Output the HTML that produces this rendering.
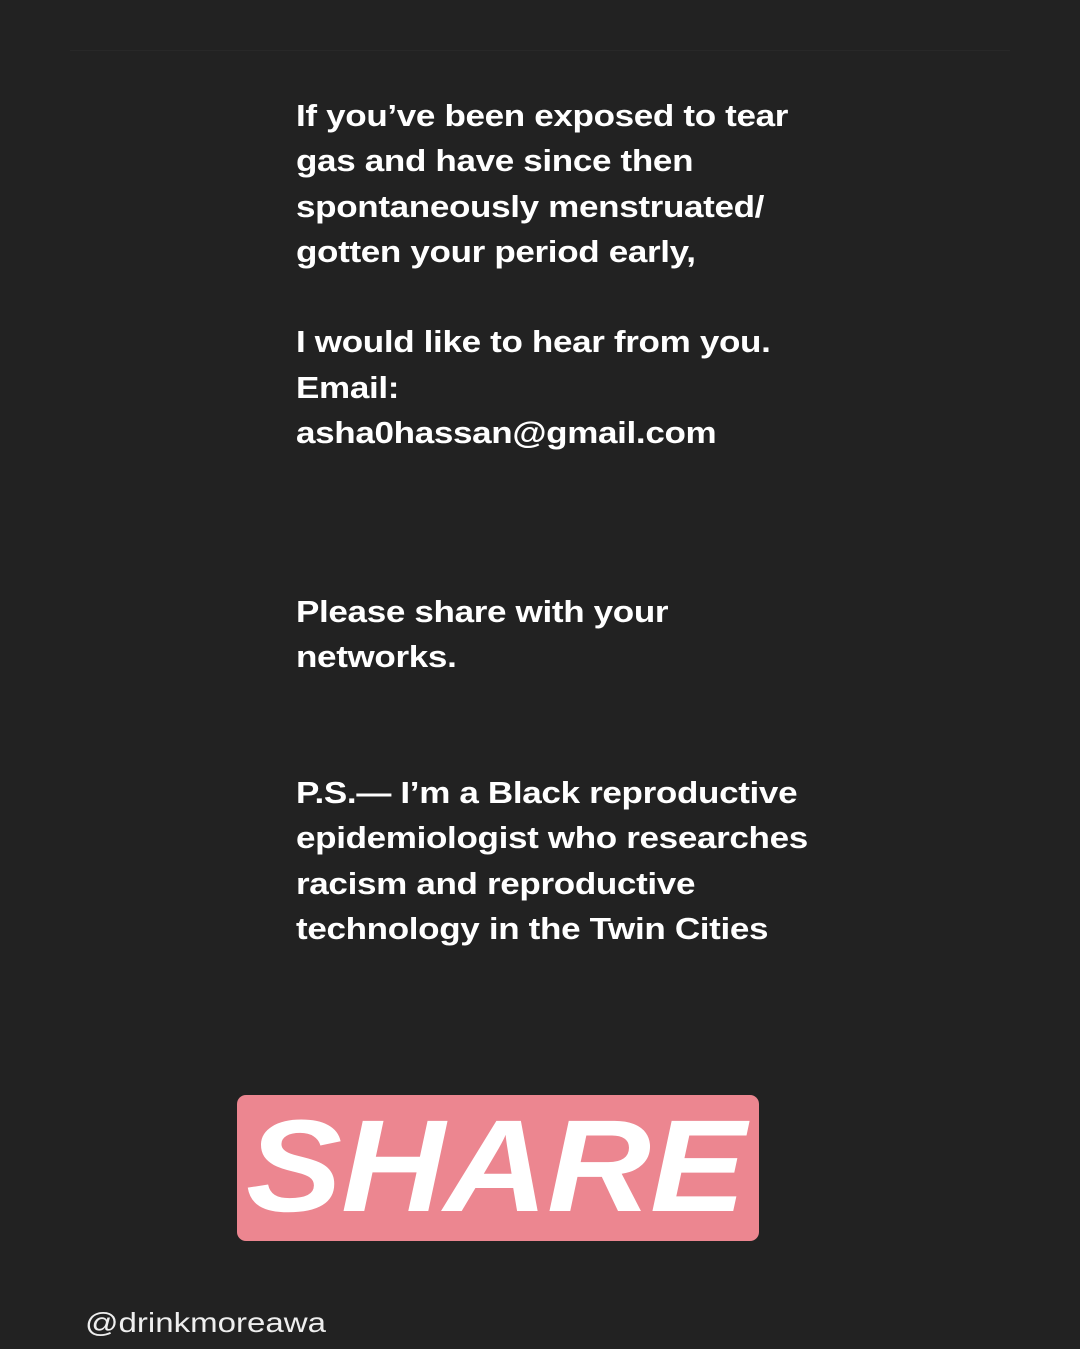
<!DOCTYPE html>
<html><head><meta charset="utf-8"><style>
html,body{margin:0;padding:0;background:#222222;}
body{width:1080px;height:1349px;position:relative;overflow:hidden;font-family:"Liberation Sans",sans-serif;}
.t{position:absolute;left:296px;color:#fff;font-weight:bold;font-size:31px;line-height:45.3px;letter-spacing:-0.3px;white-space:nowrap;transform:scaleX(1.13);transform-origin:left top;}
.box{position:absolute;left:237px;top:1095px;width:522px;height:146px;background:#ec8690;border-radius:9px;}
.share{position:absolute;left:246px;top:1096px;color:#fff;font-weight:900;font-style:italic;font-size:131px;line-height:140px;transform:scaleX(1.1);transform-origin:left center;letter-spacing:-1px;}
.h{position:absolute;left:85px;top:1306px;color:#eee;font-size:28px;line-height:34px;transform:scaleX(1.18);transform-origin:left top;}
.frame{position:absolute;left:70px;top:50px;width:940px;height:1230px;border-top:1px solid #282828;}
</style></head><body>
<div class="frame"></div>
<div class="t" style="top:93px">If you’ve been exposed to tear<br>gas and have since then<br>spontaneously menstruated/<br>gotten your period early,<br><br>I would like to hear from you.<br>Email:<br>asha0hassan@gmail.com</div>
<div class="t" style="top:589px">Please share with your<br>networks.</div>
<div class="t" style="top:770px">P.S.— I’m a Black reproductive<br>epidemiologist who researches<br>racism and reproductive<br>technology in the Twin Cities</div>
<div class="box"></div>
<div class="share">SHARE</div>
<div class="h">@drinkmoreawa</div>
</body></html>
